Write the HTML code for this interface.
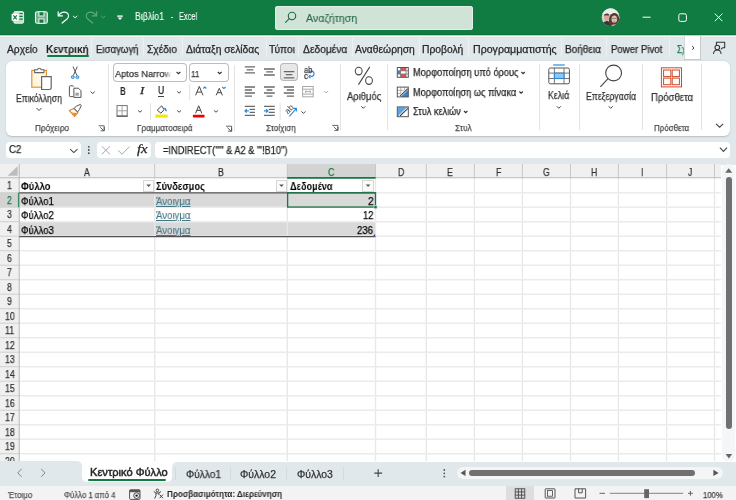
<!DOCTYPE html>
<html><head><meta charset="utf-8"><style>
html,body{margin:0;padding:0;width:736px;height:500px;overflow:hidden;background:#fff;}
body{position:relative;font-family:"Liberation Sans",sans-serif;}
.t{position:absolute;white-space:nowrap;transform-origin:0 50%;will-change:transform;}
.r{position:absolute;}
.s{position:absolute;overflow:visible;}
</style></head><body>
<div class="r" style="left:0px;top:0px;width:736px;height:35px;background:#107c41;"></div>
<svg class="s" style="left:0px;top:0px;" width="200" height="35" viewBox="0 0 200 35">
<rect x="13.8" y="11.6" width="9.8" height="11.7" rx="1.4" fill="#c6e0cf" stroke="#fff" stroke-width="0.8"/>
<path d="M19.4 13.5h3.4M19.4 16.3h3.4M19.4 19.1h3.4" stroke="#107c41" stroke-width="1.2"/>
<rect x="11.6" y="13.8" width="7" height="7" rx="0.6" fill="#fff"/>
<path d="M13.4 15.4l3.4 3.9M16.8 15.4l-3.4 3.9" stroke="#107c41" stroke-width="1.2"/>
<rect x="35.5" y="11.7" width="11.8" height="11.6" rx="1.6" fill="#6fae8a" stroke="#f2f8f4" stroke-width="1.1"/>
<rect x="38.9" y="11.7" width="5.1" height="4.3" fill="#107c41" stroke="#f2f8f4" stroke-width="1"/>
<rect x="38.9" y="18.9" width="5.1" height="4.4" fill="#107c41" stroke="#f2f8f4" stroke-width="1"/>
<g fill="none" stroke="#fff" stroke-width="1.2" stroke-linecap="round" stroke-linejoin="round">
<path d="M58.2 11.8v4.1h4.2"/>
<path d="M58.6 15.6c2-3.2 5.5-4.3 8-3c2.3 1.3 2.6 4.2 0.7 6.2l-5.2 4.2"/>
<path d="M73.4 16.2l1.8 1.6 1.8-1.6" stroke-width="1"/>
</g>
<g fill="none" stroke="#5fa77d" stroke-width="1.2" stroke-linecap="round" stroke-linejoin="round">
<path d="M96.6 11.8v4.1h-4.2"/>
<path d="M96.2 15.6c-2-3.2-5.5-4.3-8-3c-2.3 1.3-2.6 4.2-0.7 6.2l5.2 4.2"/>
<path d="M101.6 16.2l1.8 1.6 1.8-1.6" stroke-width="1"/>
</g>
<path d="M117.2 16.1h5.6" stroke="#fff" stroke-width="1.3"/>
<path d="M117.6 17.5h4.8l-2.4 2.5z" fill="#fff"/>
</svg>
<div class="t" style="left:135.30px;top:12.47px;font-size:10.2px;line-height:10.2px;font-weight:400;color:#ffffff;font-family:'Liberation Sans', sans-serif;transform:scaleX(0.8616);-webkit-text-stroke:0.25px #ffffff;-webkit-text-stroke:0.1px #fff;">Βιβλίο1</div>
<div class="t" style="left:171.10px;top:12.47px;font-size:10.2px;line-height:10.2px;font-weight:400;color:#ffffff;font-family:'Liberation Sans', sans-serif;transform:scaleX(0.6438);-webkit-text-stroke:0.25px #ffffff;-webkit-text-stroke:0.1px #fff;">-</div>
<div class="t" style="left:179.00px;top:12.47px;font-size:10.2px;line-height:10.2px;font-weight:400;color:#ffffff;font-family:'Liberation Sans', sans-serif;transform:scaleX(0.7258);-webkit-text-stroke:0.25px #ffffff;-webkit-text-stroke:0.1px #fff;">Excel</div>
<div class="r" style="left:274.8px;top:5.7px;width:198.6px;height:24px;background:#cfe3d7;border-radius:3px;box-shadow:inset 0 0 0 1px #e3efe8;"></div>
<svg class="s" style="left:280px;top:8px;" width="22" height="18" viewBox="280 8 22 18"><g fill="none" stroke="#2a6a45" stroke-width="1.15"><circle cx="292" cy="15.9" r="3.7"/><path d="M289.3 18.6l-3.8 3.8" stroke-linecap="round"/></g></svg>
<div class="t" style="left:305.80px;top:12.76px;font-size:10.8px;line-height:10.8px;font-weight:400;color:#2a6a45;font-family:'Liberation Sans', sans-serif;transform:scaleX(0.9815);-webkit-text-stroke:0.25px #2a6a45;-webkit-text-stroke:0.12px #2a6a45;">Αναζήτηση</div>
<svg class="s" style="left:600px;top:7px;" width="22" height="22" viewBox="600 7 22 22">
<defs><clipPath id="av"><circle cx="610.6" cy="17.2" r="8.9"/></clipPath></defs>
<g clip-path="url(#av)">
<rect x="600" y="7" width="22" height="22" fill="#d4d4d4"/>
<rect x="600" y="7" width="22" height="7" fill="#ececec"/>
<path d="M601 30c0-5 1.5-8 5.5-9c3 0 4.5 2 4.5 9z" fill="#3a3434"/>
<ellipse cx="606.6" cy="17.6" rx="2.7" ry="3.3" fill="#d2ab98"/>
<path d="M603.9 15.6c0.3-2.6 5.2-2.9 5.6 0z" fill="#4a3e38"/>
<path d="M609.5 27c-0.8-6-1.2-12 3-13.6c3.5-1.1 6.3 1 6.6 5.6c0.3 3.6 0.2 6 -0.3 8z" fill="#5a3a30"/>
<ellipse cx="614.3" cy="19.2" rx="2.8" ry="3.6" fill="#e0c0b2"/>
<path d="M611.8 18.4h5" stroke="#444" stroke-width="0.5"/>
<path d="M613.5 21.6h1.8" stroke="#b05050" stroke-width="0.6"/>
<path d="M610 30c0.5-4 2-5.5 4.3-5.5s4 1.5 4.5 5.5z" fill="#e6d3ca"/>
</g></svg>
<svg class="s" style="left:636px;top:8px;" width="100" height="20" viewBox="636 8 100 20">
<path d="M642.6 17.2h8" stroke="#fff" stroke-width="1"/>
<rect x="678.8" y="13.8" width="7.6" height="7.6" rx="1.6" fill="none" stroke="#fff" stroke-width="1"/>
<path d="M714.8 13.6l7.6 7.6M722.4 13.6l-7.6 7.6" stroke="#fff" stroke-width="1"/>
</svg>
<div class="r" style="left:0px;top:35px;width:736px;height:130px;background:#e1e8eb;"></div>
<div class="r" style="left:0px;top:35px;width:736px;height:0.8px;background:#b9d3c4;"></div>
<div class="r" style="left:0px;top:35.8px;width:736px;height:1.3px;background:#f3f6f7;"></div>
<div class="r" style="left:0px;top:34px;width:736px;height:1px;background:#0c7039;"></div>
<div class="t" style="left:7.10px;top:44.68px;font-size:10.3px;line-height:10.3px;font-weight:400;color:#262626;font-family:'Liberation Sans', sans-serif;transform:scaleX(0.9953);-webkit-text-stroke:0.25px #262626;">Αρχείο</div>
<div class="t" style="left:95.80px;top:44.68px;font-size:10.3px;line-height:10.3px;font-weight:400;color:#262626;font-family:'Liberation Sans', sans-serif;transform:scaleX(0.9357);-webkit-text-stroke:0.25px #262626;">Εισαγωγή</div>
<div class="t" style="left:146.60px;top:44.68px;font-size:10.3px;line-height:10.3px;font-weight:400;color:#262626;font-family:'Liberation Sans', sans-serif;transform:scaleX(0.9924);-webkit-text-stroke:0.25px #262626;">Σχέδιο</div>
<div class="t" style="left:186.30px;top:44.68px;font-size:10.3px;line-height:10.3px;font-weight:400;color:#262626;font-family:'Liberation Sans', sans-serif;transform:scaleX(1.0009);-webkit-text-stroke:0.25px #262626;">Διάταξη σελίδας</div>
<div class="t" style="left:269.10px;top:44.68px;font-size:10.3px;line-height:10.3px;font-weight:400;color:#262626;font-family:'Liberation Sans', sans-serif;transform:scaleX(0.9920);-webkit-text-stroke:0.25px #262626;">Τύποι</div>
<div class="t" style="left:302.90px;top:44.68px;font-size:10.3px;line-height:10.3px;font-weight:400;color:#262626;font-family:'Liberation Sans', sans-serif;transform:scaleX(0.9944);-webkit-text-stroke:0.25px #262626;">Δεδομένα</div>
<div class="t" style="left:354.50px;top:44.68px;font-size:10.3px;line-height:10.3px;font-weight:400;color:#262626;font-family:'Liberation Sans', sans-serif;transform:scaleX(0.9993);-webkit-text-stroke:0.25px #262626;">Αναθεώρηση</div>
<div class="t" style="left:422.30px;top:44.68px;font-size:10.3px;line-height:10.3px;font-weight:400;color:#262626;font-family:'Liberation Sans', sans-serif;transform:scaleX(0.9987);-webkit-text-stroke:0.25px #262626;">Προβολή</div>
<div class="t" style="left:472.60px;top:44.68px;font-size:10.3px;line-height:10.3px;font-weight:400;color:#262626;font-family:'Liberation Sans', sans-serif;transform:scaleX(1.0299);-webkit-text-stroke:0.25px #262626;">Προγραμματιστής</div>
<div class="t" style="left:565.30px;top:44.68px;font-size:10.3px;line-height:10.3px;font-weight:400;color:#262626;font-family:'Liberation Sans', sans-serif;transform:scaleX(0.9736);-webkit-text-stroke:0.25px #262626;">Βοήθεια</div>
<div class="t" style="left:611.00px;top:44.68px;font-size:10.3px;line-height:10.3px;font-weight:400;color:#262626;font-family:'Liberation Sans', sans-serif;transform:scaleX(0.9354);-webkit-text-stroke:0.25px #262626;">Power Pivot</div>
<div class="t" style="left:45.90px;top:44.68px;font-size:10.3px;line-height:10.3px;font-weight:700;color:#1a1a1a;font-family:'Liberation Sans', sans-serif;transform:scaleX(0.9720);">Κεντρική</div>
<div class="r" style="left:46.5px;top:55.4px;width:42.1px;height:2px;background:#107c41;border-radius:1px;"></div>
<div class="t" style="left:677.20px;top:44.68px;font-size:10.3px;line-height:10.3px;font-weight:400;color:#107c41;font-family:'Liberation Sans', sans-serif;transform:scaleX(0.7886);-webkit-text-stroke:0.25px #107c41;">Σχ</div>
<div class="r" style="left:91px;top:38px;width:1px;height:19px;background:#edf1f3;"></div>
<div class="r" style="left:143px;top:38px;width:1px;height:19px;background:#edf1f3;"></div>
<div class="r" style="left:181.8px;top:38px;width:1px;height:19px;background:#edf1f3;"></div>
<div class="r" style="left:265.5px;top:38px;width:1px;height:19px;background:#edf1f3;"></div>
<div class="r" style="left:298.4px;top:38px;width:1px;height:19px;background:#edf1f3;"></div>
<div class="r" style="left:351.5px;top:38px;width:1px;height:19px;background:#edf1f3;"></div>
<div class="r" style="left:418.6px;top:38px;width:1px;height:19px;background:#edf1f3;"></div>
<div class="r" style="left:468px;top:38px;width:1px;height:19px;background:#edf1f3;"></div>
<div class="r" style="left:560.8px;top:38px;width:1px;height:19px;background:#edf1f3;"></div>
<div class="r" style="left:606.2px;top:38px;width:1px;height:19px;background:#edf1f3;"></div>
<div class="r" style="left:668.5px;top:38px;width:1px;height:19px;background:#edf1f3;"></div>
<div class="r" style="left:684.3px;top:35.7px;width:17.1px;height:24.2px;background:#ffffff;box-shadow:inset 0 -1px 0 #c8cacc, inset 1px 0 0 #d6d9db, inset -1px 0 0 #c8cacc;"></div>
<svg class="s" style="left:684px;top:35px;" width="18" height="25" viewBox="684 35 18 25"><path d="M692.2 46.1l1.8 1.8-1.8 1.8" fill="none" stroke="#333" stroke-width="1"/></svg>
<svg class="s" style="left:708px;top:38px;" width="22" height="20" viewBox="708 38 22 20"><g fill="none" stroke="#333" stroke-width="1.05" stroke-linejoin="round">
<path d="M716.4 45V42.2h8.3v5.6h-2.2l-1.6 1.5"/>
<circle cx="717.3" cy="47.5" r="2.3"/>
<path d="M713.4 53.8c0.4-2.5 1.9-3.8 3.9-3.8s3.5 1.3 3.9 3.8"/>
</g></svg>
<div class="r" style="left:6px;top:61px;width:724.4px;height:74.5px;background:#ffffff;border-radius:6px;box-shadow:0 0.5px 1.5px rgba(0,0,0,0.18);"></div>
<svg class="s" style="left:6px;top:61px;" width="110" height="75" viewBox="6 61 110 75">
<rect x="31.8" y="70.4" width="14.6" height="16.8" fill="#fff7e6" stroke="#e8912c" stroke-width="1.2"/>
<path d="M34.6 72.6v-2.8h2.8c0.4-2 3.4-2 3.8 0h2.8v2.8z" fill="#fff" stroke="#666" stroke-width="1.1" stroke-linejoin="round"/>
<path d="M41.6 76.7h9.6v11.6l-1.2 1.2h-8.4z" fill="#fff" stroke="#666" stroke-width="1.2"/>
<g fill="none" stroke="#444" stroke-width="1"><path d="M36.5 108l2.5 2.5 2.5-2.5"/></g>
<path d="M73 66.6L76.9 75.4M77.3 66.6L73.4 75.4" stroke="#555" stroke-width="1"/>
<circle cx="72.8" cy="77.1" r="1.5" fill="#9ccbf0" stroke="#2b88d8" stroke-width="0.9"/>
<circle cx="77.4" cy="77.1" r="1.5" fill="#9ccbf0" stroke="#2b88d8" stroke-width="0.9"/>
<path d="M73.4 96.6h-3.2a0.8 0.8 0 0 1-0.8-0.8v-9.2a0.8 0.8 0 0 1 0.8-0.8h2.6a0.8 0.8 0 0 1 0.8 0.8" stroke="#555" fill="none" stroke-width="1"/>
<path d="M73.9 88.2h4.5l2.6 2.6v6.6h-7.1z" stroke="#555" fill="#fff" stroke-width="1"/>
<rect x="75.4" y="92.7" width="3.4" height="3" fill="#a0a0a0"/>
<path d="M90.6 91.6l2.1 1.9 2.1-1.9" fill="none" stroke="#444" stroke-width="1"/>
<path d="M69.4 110.6L73.8 108.4L77.9 112.7L74.6 116.3Z" fill="#fff" stroke="#e8781e" stroke-width="1.1" stroke-linejoin="round"/>
<path d="M71.8 112.6L77.2 113L74.6 115.8Z" fill="#f08a24"/>
<path d="M74 108.3L76.3 106.3L80.3 104.4L81.3 105.3L79.5 109.4L77.6 111.9Z" fill="#fff" stroke="#555" stroke-width="1" stroke-linejoin="round"/>
<path d="M98.6 125.8h5.6v5M100 127.2l3.8 3.6M100.6 130.8h3.6v-3.6" fill="none" stroke="#555" stroke-width="0.9"/>
</svg>
<div class="t" style="left:16.00px;top:94.38px;font-size:10.3px;line-height:10.3px;font-weight:400;color:#333;font-family:'Liberation Sans', sans-serif;transform:scaleX(0.8371);-webkit-text-stroke:0.25px #333;">Επικόλληση</div>
<div class="t" style="left:35.00px;top:123.06px;font-size:9.5px;line-height:9.5px;font-weight:400;color:#4a4a4a;font-family:'Liberation Sans', sans-serif;transform:scaleX(0.8645);-webkit-text-stroke:0.25px #4a4a4a;">Πρόχειρο</div>
<div class="r" style="left:107.5px;top:64px;width:1px;height:66px;background:#e3e3e3;"></div>
<div class="r" style="left:113.3px;top:63.3px;width:74.2px;height:18.3px;background:#fff;border-radius:4px;box-shadow:inset 0 0 0 1px #bdbdbd;"></div>
<div class="r" style="left:189px;top:63.3px;width:39.8px;height:18.3px;background:#fff;border-radius:4px;box-shadow:inset 0 0 0 1px #bdbdbd;"></div>
<div class="t" style="left:115.20px;top:68.72px;font-size:9.9px;line-height:9.9px;font-weight:400;color:#333;font-family:'Liberation Sans', sans-serif;transform:scaleX(0.9384);-webkit-text-stroke:0.25px #333;">Aptos Narrow</div>
<div class="r" style="left:164px;top:66px;width:9px;height:13px;background:linear-gradient(90deg, rgba(255,255,255,0), #fff 85%);"></div>
<div class="t" style="left:191.40px;top:68.72px;font-size:9.9px;line-height:9.9px;font-weight:400;color:#333;font-family:'Liberation Sans', sans-serif;transform:scaleX(0.8159);-webkit-text-stroke:0.25px #333;">11</div>
<svg class="s" style="left:105px;top:60px;" width="135" height="77" viewBox="105 60 135 77">
<g fill="none" stroke="#444" stroke-width="1">
<path d="M176.6 72l1.9 1.7 1.9-1.7M217.8 72l1.9 1.7 1.9-1.7" stroke-width="1.15" stroke="#333"/>
<path d="M177.2 91.4l1.9 1.7 1.9-1.7"/>
<path d="M138.1 110.5l1.9 1.7 1.9-1.7M177.2 110.5l1.9 1.7 1.9-1.7M214.1 110.5l1.9 1.7 1.9-1.7"/>
</g>
<path d="M189.7 83.8v16.2M150.5 103v16.6" stroke="#e0e0e0" stroke-width="1"/>
<g fill="none" stroke="#666" stroke-width="0.9">
<rect x="117" y="105.6" width="10.2" height="10.4"/>
<path d="M122.1 105.6v10.4M117 110.8h10.2" stroke="#999"/>
</g>
<path d="M116.6 116.2h11" stroke="#444" stroke-width="1"/>
<path d="M157.3 110.1L161.7 105.8L164.1 109.7L160.9 113.2Z" fill="#fff" stroke="#444" stroke-width="1" stroke-linejoin="round"/>
<path d="M164.3 108.2c1.3 0.3 2 1.6 1.5 3" fill="none" stroke="#2b7cd3" stroke-width="1.3"/>
<rect x="155.3" y="114.6" width="12.4" height="3" fill="#f5e800"/>
<rect x="192.9" y="114.7" width="11.6" height="2.8" rx="0.4" fill="#f00000"/>
<path d="M226 126.2h5.6v5M227.4 127.6l3.8 3.6M228 131.2h3.6v-3.6" fill="none" stroke="#555" stroke-width="0.9"/>
</svg>
<div class="t" style="left:119.70px;top:86.21px;font-size:10.5px;line-height:10.5px;font-weight:700;color:#262626;font-family:'Liberation Sans', sans-serif;transform:scaleX(0.7540);">B</div>
<div class="t" style="left:139.56px;top:86.13px;font-size:10.6px;line-height:10.6px;font-weight:400;color:#262626;font-family:'Liberation Serif', serif;font-style:italic;transform:scaleX(1.2165);-webkit-text-stroke:0.25px #262626;">I</div>
<div class="t" style="left:157.80px;top:86.28px;font-size:10.3px;line-height:10.3px;font-weight:400;color:#262626;font-family:'Liberation Sans', sans-serif;transform:scaleX(0.8360);-webkit-text-stroke:0.25px #262626;">U</div>
<div class="r" style="left:157.6px;top:95.9px;width:6.8px;height:0.9px;background:#444;"></div>
<svg class="s" style="left:190px;top:84px;" width="40" height="32" viewBox="190 84 40 32"><g fill="none" stroke="#444" stroke-width="1">
<path d="M195.6 95.3L199.3 86.4L203 95.3M197 92.1h4.6"/>
<path d="M216.2 95.3L219.3 88.3L222.4 95.3M217.4 92.7h3.8"/>
<path d="M195.6 113.3L198.7 105.8L201.8 113.3M196.8 110.4h3.8"/>
</g>
<g fill="none" stroke="#2b88d8" stroke-width="1.1"><path d="M203.2 88.5l1.6-1.5 1.6 1.5M222.2 87l1.7 1.5 1.7-1.5"/></g></svg>
<div class="t" style="left:137.10px;top:123.06px;font-size:9.5px;line-height:9.5px;font-weight:400;color:#4a4a4a;font-family:'Liberation Sans', sans-serif;transform:scaleX(0.8613);-webkit-text-stroke:0.25px #4a4a4a;">Γραμματοσειρά</div>
<div class="r" style="left:234.3px;top:64.6px;width:1px;height:66px;background:#e3e3e3;"></div>
<div class="r" style="left:280.1px;top:63.3px;width:17.9px;height:17.9px;background:#e8e8e8;border-radius:4px;box-shadow:inset 0 0 0 1px #b8b8b8;"></div>
<svg class="s" style="left:232px;top:60px;" width="110" height="77" viewBox="232 60 110 77">
<g stroke="#6a6a6a" stroke-width="1.3">
<path d="M244.8 66.8h10.2M246.6 69.8h6.8M244.8 72.8h10.2"/>
<path d="M264 69h10.8M266.2 71.9h6.8M264 75h10.8"/>
<path d="M283.8 71.6h10.5M285.8 74.7h6.5M283.8 77.8h10.5"/>
<path d="M244.8 87h10.2M244.8 90h7.2M244.8 93h10.2M244.8 96.1h7.2"/>
<path d="M264 87h10.8M266.6 90h5.8M264 93h10.8M266.6 96.1h5.8"/>
<path d="M283.8 87h10.2M286.8 90h7.2M283.8 93h10.2M286.8 96.1h7.2"/>
<path d="M244.8 106.4h10.2M249.6 109.4h5.4M249.6 112.4h5.4M244.8 115.4h10.2"/>
<path d="M264 106.4h10.8M268.8 109.4h6M268.8 112.4h6M264 115.4h10.8"/>
</g>
<path d="M248.8 110.9h-3.6M246.7 109.2l-1.7 1.7 1.7 1.7" fill="none" stroke="#2b88d8" stroke-width="1.2"/>
<path d="M264 110.9h3.8M266.2 109.2l1.7 1.7-1.7 1.7" fill="none" stroke="#2b88d8" stroke-width="1.2"/>
<g fill="none" stroke="#a8a8a8" stroke-width="1"><rect x="302.6" y="86.5" width="10.6" height="10.3"/><path d="M302.6 89.2h10.6M302.6 94.1h10.6M305 91.65h6M306.3 90.4l-1.3 1.25 1.3 1.25M309.7 90.4l1.3 1.25-1.3 1.25"/></g>
<path d="M324.2 91l2 2 2-2" fill="none" stroke="#aaa" stroke-width="1"/>
<path d="M280.1 102.7v17.3" stroke="#e0e0e0" stroke-width="1"/>
<path d="M310.5 76.5c2 0 3.5-1.2 3.5-2.8s-1.5-2.6-3.3-2.6h-1.8" fill="none" stroke="#2b7cd3" stroke-width="1.1"/>
<path d="M310.5 74.8l-1.7 1.7 1.7 1.7" fill="none" stroke="#2b7cd3" stroke-width="1.1"/>
<path d="M289.4 116.4l6.8-7.8M293.3 108.4h3.1v3.1" fill="none" stroke="#2b88d8" stroke-width="1.1"/>
<path d="M301.4 111.4l2 2 2-2" fill="none" stroke="#444" stroke-width="1"/>
<path d="M332.3 125.4h5.6v5M333.7 126.8l3.8 3.6M334.3 130.4h3.6v-3.6" fill="none" stroke="#555" stroke-width="0.9"/>
</svg>
<div class="t" style="left:303.70px;top:66.00px;font-size:8.5px;line-height:8.5px;font-weight:400;color:#444;font-family:'Liberation Sans', sans-serif;transform:scaleX(0.8797);-webkit-text-stroke:0.25px #444;">ab</div>
<div class="t" style="left:303.50px;top:72.30px;font-size:8.5px;line-height:8.5px;font-weight:400;color:#444;font-family:'Liberation Sans', sans-serif;transform:scaleX(0.9412);-webkit-text-stroke:0.25px #444;">c</div>
<svg class="s" style="left:280px;top:100px;" width="20" height="20" viewBox="280 100 20 20"><text x="284.6" y="112.2" font-size="8.2" fill="#444" font-family="Liberation Sans" transform="rotate(-48 288.9 109.4)">ab</text></svg>
<div class="t" style="left:266.20px;top:123.06px;font-size:9.5px;line-height:9.5px;font-weight:400;color:#4a4a4a;font-family:'Liberation Sans', sans-serif;transform:scaleX(0.8565);-webkit-text-stroke:0.25px #4a4a4a;">Στοίχιση</div>
<div class="r" style="left:340.4px;top:64px;width:1px;height:66px;background:#e3e3e3;"></div>
<svg class="s" style="left:350px;top:62px;" width="28" height="28" viewBox="350 62 28 28"><g fill="none" stroke="#444" stroke-width="1.05"><ellipse cx="358.7" cy="71.1" rx="3.4" ry="3.8"/><ellipse cx="369" cy="80.6" rx="3.4" ry="3.8"/><path d="M369.8 66.9L358.5 84.6"/></g></svg>
<div class="t" style="left:347.00px;top:91.68px;font-size:10.3px;line-height:10.3px;font-weight:400;color:#333;font-family:'Liberation Sans', sans-serif;transform:scaleX(0.9147);-webkit-text-stroke:0.25px #333;">Αριθμός</div>
<svg class="s" style="left:340px;top:100px;" width="50" height="15" viewBox="340 100 50 15"><path d="M361.3 106.3l2 2 2-2" fill="none" stroke="#444" stroke-width="1"/></svg>
<div class="r" style="left:387.2px;top:64px;width:1px;height:66px;background:#e3e3e3;"></div>
<svg class="s" style="left:390px;top:60px;" width="150" height="77" viewBox="390 60 150 77">
<rect x="397.3" y="67.5" width="11" height="9.8" fill="#fff"/>
<rect x="400.6" y="67.8" width="5.4" height="3" fill="#ea4a52"/>
<rect x="400.6" y="74" width="5.4" height="3" fill="#ea4a52"/>
<rect x="397.6" y="70.8" width="3" height="3.2" fill="#2b88d8"/>
<path d="M397.3 70.8h11M397.3 74h11M400.6 67.5v9.8M406 67.5v9.8" stroke="#777" stroke-width="0.8"/>
<rect x="397.3" y="67.5" width="11" height="9.8" fill="none" stroke="#555" stroke-width="1"/>
<rect x="397.3" y="87.1" width="11" height="9.8" fill="#fff"/>
<path d="M397.3 90.3h11M397.3 93.6h11M400.8 87.1v9.8M404.6 87.1v9.8" stroke="#999" stroke-width="0.8"/>
<path d="M400.2 96.9L408.3 88.8V96.9Z" fill="#2b88d8"/>
<path d="M399.6 96.4L407.6 88.6" stroke="#fff" stroke-width="2.4"/>
<path d="M400 96.2L407.8 88.6" stroke="#444" stroke-width="1.1"/>
<rect x="397.3" y="87.1" width="11" height="9.8" fill="none" stroke="#555" stroke-width="1"/>
<rect x="397.3" y="106.9" width="11" height="9.8" fill="#fff"/>
<path d="M397.6 107.2H408L398.2 116.4H397.6Z" fill="#5ba3e6"/>
<path d="M399.6 116.2L407.6 108.4" stroke="#fff" stroke-width="2.4"/>
<path d="M400 116L407.8 108.4" stroke="#444" stroke-width="1.1"/>
<rect x="397.3" y="106.9" width="11" height="9.8" fill="none" stroke="#555" stroke-width="1"/>
<g fill="none" stroke="#333" stroke-width="1.2"><path d="M521.4 72l1.7 1.6 1.7-1.6M519.4 91.5l1.7 1.6 1.7-1.6M464 111l1.7 1.6 1.7-1.6"/></g>
</svg>
<div class="t" style="left:412.80px;top:68.38px;font-size:10.3px;line-height:10.3px;font-weight:400;color:#262626;font-family:'Liberation Sans', sans-serif;transform:scaleX(0.8993);-webkit-text-stroke:0.25px #262626;">Μορφοποίηση υπό όρους</div>
<div class="t" style="left:412.80px;top:87.98px;font-size:10.3px;line-height:10.3px;font-weight:400;color:#262626;font-family:'Liberation Sans', sans-serif;transform:scaleX(0.8942);-webkit-text-stroke:0.25px #262626;">Μορφοποίηση ως πίνακα</div>
<div class="t" style="left:412.80px;top:107.48px;font-size:10.3px;line-height:10.3px;font-weight:400;color:#262626;font-family:'Liberation Sans', sans-serif;transform:scaleX(0.8875);-webkit-text-stroke:0.25px #262626;">Στυλ κελιών</div>
<div class="t" style="left:454.80px;top:123.06px;font-size:9.5px;line-height:9.5px;font-weight:400;color:#4a4a4a;font-family:'Liberation Sans', sans-serif;transform:scaleX(0.8746);-webkit-text-stroke:0.25px #4a4a4a;">Στυλ</div>
<div class="r" style="left:538.9px;top:64px;width:1px;height:66px;background:#e3e3e3;"></div>
<svg class="s" style="left:540px;top:60px;" width="110" height="77" viewBox="540 60 110 77">
<path d="M553.2 65h11.5" stroke="#2b88d8" stroke-width="1.2"/>
<rect x="548.8" y="68" width="20.6" height="15.8" rx="1.5" fill="#fff" stroke="#555" stroke-width="1"/>
<path d="M548.8 73.1h20.6M548.8 78.5h20.6M554.4 68v15.8M564 68v15.8" stroke="#666" stroke-width="0.9"/>
<rect x="554.4" y="73.1" width="9.6" height="5.4" fill="#9cc5ee" stroke="#2b88d8" stroke-width="1.1"/>
<path d="M556.8 106.3l2 2 2-2M608.7 106.3l2 2 2-2" fill="none" stroke="#444" stroke-width="1"/>
<circle cx="613.6" cy="73" r="7.9" fill="none" stroke="#444" stroke-width="1.1"/>
<path d="M608 78.6l-7.6 8.2" stroke="#444" stroke-width="1.1"/>
</svg>
<div class="t" style="left:548.20px;top:91.28px;font-size:10.3px;line-height:10.3px;font-weight:400;color:#333;font-family:'Liberation Sans', sans-serif;transform:scaleX(0.8523);-webkit-text-stroke:0.25px #333;">Κελιά</div>
<div class="r" style="left:579.2px;top:64px;width:1px;height:66px;background:#e3e3e3;"></div>
<div class="t" style="left:585.70px;top:91.68px;font-size:10.3px;line-height:10.3px;font-weight:400;color:#333;font-family:'Liberation Sans', sans-serif;transform:scaleX(0.8445);-webkit-text-stroke:0.25px #333;">Επεξεργασία</div>
<div class="r" style="left:642.4px;top:64px;width:1px;height:66px;background:#e3e3e3;"></div>
<svg class="s" style="left:650px;top:62px;" width="40" height="30" viewBox="650 62 40 30"><g fill="none" stroke="#d24726" stroke-width="1">
<rect x="661.4" y="67.8" width="20.1" height="19.1"/>
<rect x="663.6" y="70" width="7.2" height="6.6"/><rect x="672.2" y="70" width="7.2" height="6.6"/>
<rect x="663.6" y="78.1" width="7.2" height="6.6"/><rect x="672.2" y="78.1" width="7.2" height="6.6"/>
</g></svg>
<div class="t" style="left:650.70px;top:92.98px;font-size:10.3px;line-height:10.3px;font-weight:400;color:#333;font-family:'Liberation Sans', sans-serif;transform:scaleX(0.9237);-webkit-text-stroke:0.25px #333;">Πρόσθετα</div>
<div class="t" style="left:653.90px;top:123.06px;font-size:9.5px;line-height:9.5px;font-weight:400;color:#4a4a4a;font-family:'Liberation Sans', sans-serif;transform:scaleX(0.8373);-webkit-text-stroke:0.25px #4a4a4a;">Πρόσθετα</div>
<div class="r" style="left:700.8px;top:64px;width:1px;height:66px;background:#e3e3e3;"></div>
<svg class="s" style="left:710px;top:118px;" width="20" height="14" viewBox="710 118 20 14"><path d="M716 123.8l3.6 3.4 3.6-3.4" fill="none" stroke="#444" stroke-width="1.1"/></svg>
<div class="r" style="left:6px;top:141.8px;width:75px;height:16.2px;background:#fff;border-radius:4px;"></div>
<div class="t" style="left:9.00px;top:145.37px;font-size:10.2px;line-height:10.2px;font-weight:400;color:#262626;font-family:'Liberation Sans', sans-serif;transform:scaleX(0.9498);-webkit-text-stroke:0.25px #262626;">C2</div>
<svg class="s" style="left:60px;top:140px;" width="100" height="20" viewBox="60 140 100 20">
<path d="M70.2 149.2l3.6 3.4 3.6-3.4" fill="none" stroke="#444" stroke-width="1.05"/>
<g fill="#444"><circle cx="88.8" cy="146.8" r="0.9"/><circle cx="88.8" cy="150" r="0.9"/><circle cx="88.8" cy="153.2" r="0.9"/></g>
</svg>
<div class="r" style="left:97px;top:141.7px;width:53.9px;height:16.3px;background:#fff;border-radius:4px;"></div>
<svg class="s" style="left:97px;top:141px;" width="55" height="18" viewBox="97 141 55 18">
<path d="M101.8 146.3l8.2 8M110 146.3l-8.2 8" stroke="#a8a8a8" stroke-width="1"/>
<path d="M118.2 150.4l3.8 3.8 7.6-7.6" fill="none" stroke="#a8a8a8" stroke-width="1"/>
</svg>
<div class="t" style="left:136.60px;top:143.17px;font-size:12.2px;line-height:12.2px;font-weight:400;color:#262626;font-family:'Liberation Serif', serif;font-style:italic;transform:scaleX(1.2067);-webkit-text-stroke:0.25px #262626;">fx</div>
<div class="r" style="left:155px;top:141.7px;width:575px;height:16.5px;background:#fff;border-radius:4px;"></div>
<div class="t" style="left:163.20px;top:146.17px;font-size:10.2px;line-height:10.2px;font-weight:400;color:#262626;font-family:'Liberation Sans', sans-serif;transform:scaleX(0.9086);-webkit-text-stroke:0.25px #262626;">=INDIRECT(&quot;&#x27;&quot; &amp; A2 &amp; &quot;&#x27;!B10&quot;)</div>
<svg class="s" style="left:710px;top:142px;" width="22" height="16" viewBox="710 142 22 16"><path d="M719.9 147.6l3.55 3.8 3.55-3.8" fill="none" stroke="#444" stroke-width="1.05"/></svg>
<div class="r" style="left:0px;top:164px;width:721px;height:297.3px;background:#ffffff;"></div>
<div class="r" style="left:0px;top:164px;width:721px;height:14px;background:#f0f0f0;"></div>
<div class="r" style="left:287.2px;top:164px;width:88.3px;height:14px;background:#d3d3d3;"></div>
<div class="r" style="left:0px;top:164px;width:19.25px;height:297.3px;background:#f0f0f0;"></div>
<div class="r" style="left:0px;top:192.7px;width:19.25px;height:14.5px;background:#d3d3d3;"></div>
<div class="r" style="left:19.25px;top:192.7px;width:356.25px;height:14.5px;background:#d9d9d9;"></div>
<div class="r" style="left:19.25px;top:221.7px;width:356.25px;height:14.5px;background:#d9d9d9;"></div>
<svg class="s" style="left:0px;top:160px;" width="736" height="305" viewBox="0 160 736 305"><path d="M154.7 178.2V461.3" stroke="#e8e8e8" stroke-width="1.35"/><path d="M287.3 178.2V461.3" stroke="#e8e8e8" stroke-width="1.35"/><path d="M375.5 178.2V461.3" stroke="#e8e8e8" stroke-width="1.35"/><path d="M426.3 178.2V461.3" stroke="#e8e8e8" stroke-width="1.35"/><path d="M474.4 178.2V461.3" stroke="#e8e8e8" stroke-width="1.35"/><path d="M522.4 178.2V461.3" stroke="#e8e8e8" stroke-width="1.35"/><path d="M570.5 178.2V461.3" stroke="#e8e8e8" stroke-width="1.35"/><path d="M618.4 178.2V461.3" stroke="#e8e8e8" stroke-width="1.35"/><path d="M666.6 178.2V461.3" stroke="#e8e8e8" stroke-width="1.35"/><path d="M714.5 178.2V461.3" stroke="#e8e8e8" stroke-width="1.35"/><path d="M19.25 192.7H721" stroke="#ebebeb" stroke-width="1.35"/><path d="M19.25 207.2H721" stroke="#ebebeb" stroke-width="1.35"/><path d="M19.25 221.7H721" stroke="#ebebeb" stroke-width="1.35"/><path d="M19.25 236.2H721" stroke="#ebebeb" stroke-width="1.35"/><path d="M19.25 250.7H721" stroke="#ebebeb" stroke-width="1.35"/><path d="M19.25 265.2H721" stroke="#ebebeb" stroke-width="1.35"/><path d="M19.25 279.7H721" stroke="#ebebeb" stroke-width="1.35"/><path d="M19.25 294.2H721" stroke="#ebebeb" stroke-width="1.35"/><path d="M19.25 308.7H721" stroke="#ebebeb" stroke-width="1.35"/><path d="M19.25 323.2H721" stroke="#ebebeb" stroke-width="1.35"/><path d="M19.25 337.7H721" stroke="#ebebeb" stroke-width="1.35"/><path d="M19.25 352.2H721" stroke="#ebebeb" stroke-width="1.35"/><path d="M19.25 366.7H721" stroke="#ebebeb" stroke-width="1.35"/><path d="M19.25 381.2H721" stroke="#ebebeb" stroke-width="1.35"/><path d="M19.25 395.7H721" stroke="#ebebeb" stroke-width="1.35"/><path d="M19.25 410.2H721" stroke="#ebebeb" stroke-width="1.35"/><path d="M19.25 424.7H721" stroke="#ebebeb" stroke-width="1.35"/><path d="M19.25 439.2H721" stroke="#ebebeb" stroke-width="1.35"/><path d="M19.25 453.7H721" stroke="#ebebeb" stroke-width="1.35"/><path d="M19.25 468.2H721" stroke="#ebebeb" stroke-width="1.35"/><path d="M154.7 164V178.2" stroke="#c8c8c8" stroke-width="1"/><path d="M287.3 164V178.2" stroke="#c8c8c8" stroke-width="1"/><path d="M375.5 164V178.2" stroke="#c8c8c8" stroke-width="1"/><path d="M426.3 164V178.2" stroke="#c8c8c8" stroke-width="1"/><path d="M474.4 164V178.2" stroke="#c8c8c8" stroke-width="1"/><path d="M522.4 164V178.2" stroke="#c8c8c8" stroke-width="1"/><path d="M570.5 164V178.2" stroke="#c8c8c8" stroke-width="1"/><path d="M618.4 164V178.2" stroke="#c8c8c8" stroke-width="1"/><path d="M666.6 164V178.2" stroke="#c8c8c8" stroke-width="1"/><path d="M714.5 164V178.2" stroke="#c8c8c8" stroke-width="1"/><path d="M0 192.7H19.25" stroke="#d0d0d0" stroke-width="1"/><path d="M0 207.2H19.25" stroke="#d0d0d0" stroke-width="1"/><path d="M0 221.7H19.25" stroke="#d0d0d0" stroke-width="1"/><path d="M0 236.2H19.25" stroke="#d0d0d0" stroke-width="1"/><path d="M0 250.7H19.25" stroke="#d0d0d0" stroke-width="1"/><path d="M0 265.2H19.25" stroke="#d0d0d0" stroke-width="1"/><path d="M0 279.7H19.25" stroke="#d0d0d0" stroke-width="1"/><path d="M0 294.2H19.25" stroke="#d0d0d0" stroke-width="1"/><path d="M0 308.7H19.25" stroke="#d0d0d0" stroke-width="1"/><path d="M0 323.2H19.25" stroke="#d0d0d0" stroke-width="1"/><path d="M0 337.7H19.25" stroke="#d0d0d0" stroke-width="1"/><path d="M0 352.2H19.25" stroke="#d0d0d0" stroke-width="1"/><path d="M0 366.7H19.25" stroke="#d0d0d0" stroke-width="1"/><path d="M0 381.2H19.25" stroke="#d0d0d0" stroke-width="1"/><path d="M0 395.7H19.25" stroke="#d0d0d0" stroke-width="1"/><path d="M0 410.2H19.25" stroke="#d0d0d0" stroke-width="1"/><path d="M0 424.7H19.25" stroke="#d0d0d0" stroke-width="1"/><path d="M0 439.2H19.25" stroke="#d0d0d0" stroke-width="1"/><path d="M0 453.7H19.25" stroke="#d0d0d0" stroke-width="1"/><path d="M0 468.2H19.25" stroke="#d0d0d0" stroke-width="1"/><path d="M0 177.7H721" stroke="#bdbdbd" stroke-width="1.1"/><path d="M19.25 164V461.3" stroke="#bdbdbd" stroke-width="1.1"/><path d="M287.2 177.8H375.6" stroke="#107c41" stroke-width="1.7"/><path d="M18.55 192.7V207.2" stroke="#3c8a5c" stroke-width="1.3"/><path d="M19.25 192.8H375.5" stroke="#505050" stroke-width="1.2"/><path d="M19.25 236.6H375.5" stroke="#505050" stroke-width="1.2"/><path d="M17.6 166.2V175.8H7.6z" fill="#bdbdbd"/><rect x="287.6" y="192.75" width="87.9" height="14.3" fill="none" stroke="#1f7346" stroke-width="1.35"/><rect x="373.9" y="205.5" width="3.2" height="3.2" rx="0.8" fill="#1f7346" stroke="#fff" stroke-width="0.6"/><path d="M375.2 233.8V236.4H372.6z" fill="#2b5797"/></svg>
<div class="r" style="left:142.8px;top:179.6px;width:11.6px;height:12px;background:#fbfbfb;box-shadow:inset 0 0 0 1px #d6d6d6;"></div>
<div class="r" style="left:275.6px;top:179.6px;width:11.6px;height:12px;background:#fbfbfb;box-shadow:inset 0 0 0 1px #d6d6d6;"></div>
<div class="r" style="left:362.2px;top:179.6px;width:11.6px;height:12px;background:#fbfbfb;box-shadow:inset 0 0 0 1px #d6d6d6;"></div>
<svg class="s" style="left:140px;top:178px;" width="240" height="16" viewBox="140 178 240 16"><path d="M146.4 184.6h4.6l-2.3 2.3z" fill="#555"/><path d="M279.20000000000005 184.6h4.6l-2.3 2.3z" fill="#555"/><path d="M365.8 184.6h4.6l-2.3 2.3z" fill="#555"/></svg>
<div class="t" style="left:84.09px;top:167.36px;font-size:10.8px;line-height:10.8px;font-weight:400;color:#333;font-family:'Liberation Sans', sans-serif;transform:scaleX(0.7965);-webkit-text-stroke:0.25px #333;">A</div>
<div class="t" style="left:218.12px;top:167.36px;font-size:10.8px;line-height:10.8px;font-weight:400;color:#333;font-family:'Liberation Sans', sans-serif;transform:scaleX(0.8024);-webkit-text-stroke:0.25px #333;">B</div>
<div class="t" style="left:328.28px;top:167.36px;font-size:10.8px;line-height:10.8px;font-weight:400;color:#107c41;font-family:'Liberation Sans', sans-serif;transform:scaleX(0.8024);-webkit-text-stroke:0.25px #107c41;">C</div>
<div class="t" style="left:397.78px;top:167.36px;font-size:10.8px;line-height:10.8px;font-weight:400;color:#333;font-family:'Liberation Sans', sans-serif;transform:scaleX(0.8024);-webkit-text-stroke:0.25px #333;">D</div>
<div class="t" style="left:447.47px;top:167.36px;font-size:10.8px;line-height:10.8px;font-weight:400;color:#333;font-family:'Liberation Sans', sans-serif;transform:scaleX(0.8024);-webkit-text-stroke:0.25px #333;">E</div>
<div class="t" style="left:495.76px;top:167.36px;font-size:10.8px;line-height:10.8px;font-weight:400;color:#333;font-family:'Liberation Sans', sans-serif;transform:scaleX(0.8011);-webkit-text-stroke:0.25px #333;">F</div>
<div class="t" style="left:543.09px;top:167.36px;font-size:10.8px;line-height:10.8px;font-weight:400;color:#333;font-family:'Liberation Sans', sans-serif;transform:scaleX(0.7978);-webkit-text-stroke:0.25px #333;">G</div>
<div class="t" style="left:591.33px;top:167.36px;font-size:10.8px;line-height:10.8px;font-weight:400;color:#333;font-family:'Liberation Sans', sans-serif;transform:scaleX(0.8024);-webkit-text-stroke:0.25px #333;">H</div>
<div class="t" style="left:641.30px;top:167.36px;font-size:10.8px;line-height:10.8px;font-weight:400;color:#333;font-family:'Liberation Sans', sans-serif;transform:scaleX(0.7938);-webkit-text-stroke:0.25px #333;">I</div>
<div class="t" style="left:688.39px;top:167.36px;font-size:10.8px;line-height:10.8px;font-weight:400;color:#333;font-family:'Liberation Sans', sans-serif;transform:scaleX(0.8000);-webkit-text-stroke:0.25px #333;">J</div>
<div class="t" style="left:7.39px;top:181.27px;font-size:10.2px;line-height:10.2px;font-weight:400;color:#333;font-family:'Liberation Sans', sans-serif;transform:scaleX(0.8518);-webkit-text-stroke:0.25px #333;">1</div>
<div class="t" style="left:7.39px;top:195.77px;font-size:10.2px;line-height:10.2px;font-weight:400;color:#107c41;font-family:'Liberation Sans', sans-serif;transform:scaleX(0.8518);-webkit-text-stroke:0.25px #107c41;">2</div>
<div class="t" style="left:7.39px;top:210.27px;font-size:10.2px;line-height:10.2px;font-weight:400;color:#333;font-family:'Liberation Sans', sans-serif;transform:scaleX(0.8518);-webkit-text-stroke:0.25px #333;">3</div>
<div class="t" style="left:7.39px;top:224.77px;font-size:10.2px;line-height:10.2px;font-weight:400;color:#333;font-family:'Liberation Sans', sans-serif;transform:scaleX(0.8518);-webkit-text-stroke:0.25px #333;">4</div>
<div class="t" style="left:7.39px;top:239.27px;font-size:10.2px;line-height:10.2px;font-weight:400;color:#333;font-family:'Liberation Sans', sans-serif;transform:scaleX(0.8518);-webkit-text-stroke:0.25px #333;">5</div>
<div class="t" style="left:7.39px;top:253.77px;font-size:10.2px;line-height:10.2px;font-weight:400;color:#333;font-family:'Liberation Sans', sans-serif;transform:scaleX(0.8518);-webkit-text-stroke:0.25px #333;">6</div>
<div class="t" style="left:7.39px;top:268.27px;font-size:10.2px;line-height:10.2px;font-weight:400;color:#333;font-family:'Liberation Sans', sans-serif;transform:scaleX(0.8518);-webkit-text-stroke:0.25px #333;">7</div>
<div class="t" style="left:7.39px;top:282.77px;font-size:10.2px;line-height:10.2px;font-weight:400;color:#333;font-family:'Liberation Sans', sans-serif;transform:scaleX(0.8518);-webkit-text-stroke:0.25px #333;">8</div>
<div class="t" style="left:7.39px;top:297.27px;font-size:10.2px;line-height:10.2px;font-weight:400;color:#333;font-family:'Liberation Sans', sans-serif;transform:scaleX(0.8518);-webkit-text-stroke:0.25px #333;">9</div>
<div class="t" style="left:4.98px;top:311.77px;font-size:10.2px;line-height:10.2px;font-weight:400;color:#333;font-family:'Liberation Sans', sans-serif;transform:scaleX(0.8518);-webkit-text-stroke:0.25px #333;">10</div>
<div class="t" style="left:5.30px;top:326.27px;font-size:10.2px;line-height:10.2px;font-weight:400;color:#333;font-family:'Liberation Sans', sans-serif;transform:scaleX(0.8485);-webkit-text-stroke:0.25px #333;">11</div>
<div class="t" style="left:4.98px;top:340.77px;font-size:10.2px;line-height:10.2px;font-weight:400;color:#333;font-family:'Liberation Sans', sans-serif;transform:scaleX(0.8518);-webkit-text-stroke:0.25px #333;">12</div>
<div class="t" style="left:4.98px;top:355.27px;font-size:10.2px;line-height:10.2px;font-weight:400;color:#333;font-family:'Liberation Sans', sans-serif;transform:scaleX(0.8518);-webkit-text-stroke:0.25px #333;">13</div>
<div class="t" style="left:4.98px;top:369.77px;font-size:10.2px;line-height:10.2px;font-weight:400;color:#333;font-family:'Liberation Sans', sans-serif;transform:scaleX(0.8518);-webkit-text-stroke:0.25px #333;">14</div>
<div class="t" style="left:4.98px;top:384.27px;font-size:10.2px;line-height:10.2px;font-weight:400;color:#333;font-family:'Liberation Sans', sans-serif;transform:scaleX(0.8518);-webkit-text-stroke:0.25px #333;">15</div>
<div class="t" style="left:4.98px;top:398.77px;font-size:10.2px;line-height:10.2px;font-weight:400;color:#333;font-family:'Liberation Sans', sans-serif;transform:scaleX(0.8518);-webkit-text-stroke:0.25px #333;">16</div>
<div class="t" style="left:4.98px;top:413.27px;font-size:10.2px;line-height:10.2px;font-weight:400;color:#333;font-family:'Liberation Sans', sans-serif;transform:scaleX(0.8518);-webkit-text-stroke:0.25px #333;">17</div>
<div class="t" style="left:4.98px;top:427.77px;font-size:10.2px;line-height:10.2px;font-weight:400;color:#333;font-family:'Liberation Sans', sans-serif;transform:scaleX(0.8518);-webkit-text-stroke:0.25px #333;">18</div>
<div class="t" style="left:4.98px;top:442.27px;font-size:10.2px;line-height:10.2px;font-weight:400;color:#333;font-family:'Liberation Sans', sans-serif;transform:scaleX(0.8518);-webkit-text-stroke:0.25px #333;">19</div>
<div class="t" style="left:4.98px;top:456.77px;font-size:10.2px;line-height:10.2px;font-weight:400;color:#333;font-family:'Liberation Sans', sans-serif;transform:scaleX(0.8518);-webkit-text-stroke:0.25px #333;">20</div>
<div class="t" style="left:21.00px;top:180.76px;font-size:10.8px;line-height:10.8px;font-weight:700;color:#000;font-family:'Liberation Sans', sans-serif;transform:scaleX(0.8769);">Φύλλο</div>
<div class="t" style="left:156.10px;top:181.16px;font-size:10.8px;line-height:10.8px;font-weight:700;color:#000;font-family:'Liberation Sans', sans-serif;transform:scaleX(0.8633);">Σύνδεσμος</div>
<div class="t" style="left:290.00px;top:181.16px;font-size:10.8px;line-height:10.8px;font-weight:700;color:#000;font-family:'Liberation Sans', sans-serif;transform:scaleX(0.8472);">Δεδομένα</div>
<div class="t" style="left:21.00px;top:195.56px;font-size:10.8px;line-height:10.8px;font-weight:400;color:#000;font-family:'Liberation Sans', sans-serif;transform:scaleX(0.8802);-webkit-text-stroke:0.25px #000;">Φύλλο1</div>
<div class="t" style="left:156.10px;top:195.56px;font-size:10.8px;line-height:10.8px;font-weight:400;color:#467886;font-family:'Liberation Sans', sans-serif;transform:scaleX(0.8897);-webkit-text-stroke:0.25px #467886;-webkit-text-stroke:0.12px #467886;text-decoration:underline;text-decoration-thickness:0.6px;text-underline-offset:1px;">Άνοιγμα</div>
<div class="t" style="left:21.00px;top:210.06px;font-size:10.8px;line-height:10.8px;font-weight:400;color:#000;font-family:'Liberation Sans', sans-serif;transform:scaleX(0.8802);-webkit-text-stroke:0.25px #000;">Φύλλο2</div>
<div class="t" style="left:156.10px;top:210.06px;font-size:10.8px;line-height:10.8px;font-weight:400;color:#467886;font-family:'Liberation Sans', sans-serif;transform:scaleX(0.8897);-webkit-text-stroke:0.25px #467886;-webkit-text-stroke:0.12px #467886;text-decoration:underline;text-decoration-thickness:0.6px;text-underline-offset:1px;">Άνοιγμα</div>
<div class="t" style="left:21.00px;top:224.56px;font-size:10.8px;line-height:10.8px;font-weight:400;color:#000;font-family:'Liberation Sans', sans-serif;transform:scaleX(0.8802);-webkit-text-stroke:0.25px #000;">Φύλλο3</div>
<div class="t" style="left:156.10px;top:224.56px;font-size:10.8px;line-height:10.8px;font-weight:400;color:#467886;font-family:'Liberation Sans', sans-serif;transform:scaleX(0.8897);-webkit-text-stroke:0.25px #467886;-webkit-text-stroke:0.12px #467886;text-decoration:underline;text-decoration-thickness:0.6px;text-underline-offset:1px;">Άνοιγμα</div>
<div class="t" style="left:367.80px;top:195.56px;font-size:10.8px;line-height:10.8px;font-weight:400;color:#000;font-family:'Liberation Sans', sans-serif;transform:scaleX(0.9343);-webkit-text-stroke:0.25px #000;">2</div>
<div class="t" style="left:363.00px;top:210.06px;font-size:10.8px;line-height:10.8px;font-weight:400;color:#000;font-family:'Liberation Sans', sans-serif;transform:scaleX(0.8675);-webkit-text-stroke:0.25px #000;">12</div>
<div class="t" style="left:357.40px;top:224.56px;font-size:10.8px;line-height:10.8px;font-weight:400;color:#000;font-family:'Liberation Sans', sans-serif;transform:scaleX(0.8871);-webkit-text-stroke:0.25px #000;">236</div>
<div class="r" style="left:721.5px;top:164px;width:13.5px;height:298px;background:#f5f6f7;border-radius:7px;"></div>
<div class="r" style="left:726px;top:176.5px;width:6px;height:252.5px;background:#707070;border-radius:3px;"></div>
<svg class="s" style="left:722px;top:165px;" width="13" height="296" viewBox="722 165 13 296"><path d="M725.2 172.8h7l-3.5-4.6z" fill="#666"/><path d="M725.6 454h6.6l-3.3 4.5z" fill="#666"/></svg>
<div class="r" style="left:0px;top:461.3px;width:736px;height:24px;background:#fff;"></div>
<div class="r" style="left:0px;top:461.3px;width:82.4px;height:24px;background:#e1e8eb;border-top-right-radius:5px;"></div>
<div class="r" style="left:172.3px;top:461.8px;width:563.7px;height:23.5px;background:#e1e8eb;border-top-left-radius:5px;"></div>
<div class="r" style="left:82.4px;top:476px;width:89.9px;height:9.3px;background:#e1e8eb;"></div>
<div class="r" style="left:82.4px;top:461.3px;width:89.9px;height:20.5px;background:#fff;border-radius:0 0 5px 5px;"></div>
<div class="r" style="left:88.2px;top:478.6px;width:78.2px;height:2px;background:#107c41;border-radius:1px;"></div>
<svg class="s" style="left:0px;top:462px;" width="60" height="22" viewBox="0 462 60 22"><path d="M21.6 468.9l-3.8 4 3.8 4M41.2 468.9l3.8 4-3.8 4" fill="none" stroke="#888" stroke-width="1"/></svg>
<div class="t" style="left:89.50px;top:466.93px;font-size:10.6px;line-height:10.6px;font-weight:400;color:#262626;font-family:'Liberation Sans', sans-serif;transform:scaleX(1.0464);-webkit-text-stroke:0.25px #262626;-webkit-text-stroke:0.45px #262626;">Κεντρικό Φύλλο</div>
<div class="t" style="left:185.60px;top:470.28px;font-size:10.3px;line-height:10.3px;font-weight:400;color:#333;font-family:'Liberation Sans', sans-serif;transform:scaleX(0.9878);-webkit-text-stroke:0.25px #333;">Φύλλο1</div>
<div class="t" style="left:240.30px;top:470.28px;font-size:10.3px;line-height:10.3px;font-weight:400;color:#333;font-family:'Liberation Sans', sans-serif;transform:scaleX(1.0160);-webkit-text-stroke:0.25px #333;">Φύλλο2</div>
<div class="t" style="left:296.60px;top:470.28px;font-size:10.3px;line-height:10.3px;font-weight:400;color:#333;font-family:'Liberation Sans', sans-serif;transform:scaleX(1.0132);-webkit-text-stroke:0.25px #333;">Φύλλο3</div>
<div class="r" style="left:175.4px;top:466.6px;width:1px;height:13.6px;background:#d3d9dc;"></div>
<div class="r" style="left:230px;top:466.6px;width:1px;height:13.6px;background:#d3d9dc;"></div>
<div class="r" style="left:285.6px;top:466.6px;width:1px;height:13.6px;background:#d3d9dc;"></div>
<div class="r" style="left:342.5px;top:466.6px;width:1px;height:13.6px;background:#d3d9dc;"></div>
<svg class="s" style="left:370px;top:465px;" width="85" height="16" viewBox="370 465 85 16"><path d="M378.2 469.2v7.8M374.3 473.1h7.8" stroke="#444" stroke-width="1.1"/>
<g fill="#555"><circle cx="444.3" cy="470" r="0.9"/><circle cx="444.3" cy="473.3" r="0.9"/><circle cx="444.3" cy="476.6" r="0.9"/></g></svg>
<div class="r" style="left:456.5px;top:466.6px;width:266.2px;height:12.9px;background:#f3f5f6;border-radius:6.5px;"></div>
<div class="r" style="left:469.4px;top:470px;width:225.8px;height:6.2px;background:#707070;border-radius:3.1px;"></div>
<svg class="s" style="left:456px;top:466px;" width="268" height="14" viewBox="456 466 268 14"><path d="M465.5 469.8v6.2l-5 -3.1z" fill="#555"/><path d="M713.4 469.8v6.2l5.2-3.1z" fill="#555"/></svg>
<div class="r" style="left:0px;top:485.2px;width:736px;height:14.8px;background:#f3f3f3;"></div>
<div class="r" style="left:0px;top:485.2px;width:736px;height:0.8px;background:#e6e6e6;"></div>
<div class="t" style="left:7.68px;top:490.52px;font-size:8.6px;line-height:8.6px;font-weight:400;color:#555;font-family:'Liberation Sans', sans-serif;transform:scaleX(0.9121);-webkit-text-stroke:0.25px #555;">Έτοιμο</div>
<div class="t" style="left:63.60px;top:490.52px;font-size:8.6px;line-height:8.6px;font-weight:400;color:#555;font-family:'Liberation Sans', sans-serif;transform:scaleX(0.8981);-webkit-text-stroke:0.25px #555;">Φύλλο 1 από 4</div>
<svg class="s" style="left:120px;top:486px;" width="60" height="14" viewBox="120 486 60 14"><rect x="129.6" y="489.8" width="10.4" height="9.6" rx="1" fill="none" stroke="#555" stroke-width="1"/>
<rect x="129.6" y="489.8" width="10.4" height="2.4" fill="#555"/>
<circle cx="136.6" cy="495.6" r="2.9" fill="#f3f3f3" stroke="#444" stroke-width="1"/>
<circle cx="136.6" cy="495.6" r="1.2" fill="#222"/>
<g fill="none" stroke="#444" stroke-width="1" stroke-linejoin="round">
<circle cx="157.4" cy="490.4" r="1.3"/>
<path d="M153.8 491.6l2.2 1.4h2.8l2.2-1.4M156 493v2.6l-1.4 3M158.8 493v1.8"/>
<path d="M159.6 494.6l3.4 3.6M163 494.6l-3.4 3.6"/>
</g></svg>
<div class="t" style="left:166.60px;top:490.76px;font-size:8.2px;line-height:8.2px;font-weight:700;color:#262626;font-family:'Liberation Sans', sans-serif;transform:scaleX(0.9840);">Προσβασιμότητα: Διερεύνηση</div>
<div class="r" style="left:506.3px;top:485.8px;width:27.6px;height:14.2px;background:#dedede;"></div>
<svg class="s" style="left:500px;top:486px;" width="236" height="14" viewBox="500 486 236 14"><g fill="none" stroke="#444" stroke-width="0.9">
<rect x="515.2" y="488.8" width="9.6" height="9.4"/>
<path d="M518.4 488.8v9.4M521.6 488.8v9.4M515.2 491.9h9.6M515.2 495.1h9.6"/>
<rect x="545.2" y="488.8" width="9.8" height="9.2" rx="0.5"/>
<rect x="547.6" y="490.6" width="5" height="5.6" stroke-width="0.8"/>
<path d="M575 488.8h10.6v9.2H575zM578.6 488.8v4h3.6v-4"/>
</g>
<path d="M599.5 493.3h5.5M688 493.3h4.8M690.4 490.9v4.8" stroke="#555" stroke-width="0.9"/>
<path d="M609.8 493.3H683.2" stroke="#777" stroke-width="0.9"/>
<rect x="644.2" y="489.2" width="4.8" height="8.9" fill="#666"/>
</svg>
<div class="t" style="left:703.00px;top:490.95px;font-size:8.8px;line-height:8.8px;font-weight:400;color:#444;font-family:'Liberation Sans', sans-serif;transform:scaleX(0.8745);-webkit-text-stroke:0.25px #444;">100%</div>
</body></html>
